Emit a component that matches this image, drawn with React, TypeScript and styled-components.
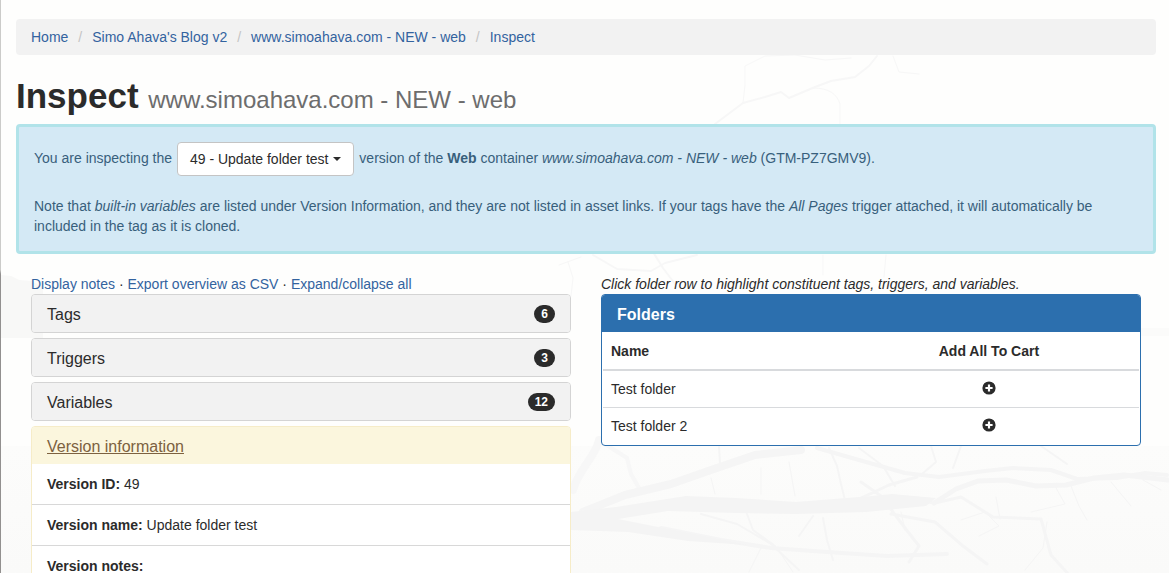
import React from 'react';
import styled, { createGlobalStyle } from 'styled-components';

const GlobalStyle = createGlobalStyle`
  *, *::before, *::after { box-sizing: border-box; }
  html { min-height: 100%; background: #fefefd; }
  body {
    margin: 0;
    overflow: hidden;
    color: #2b2b2b;
    font: 14px/20px "Liberation Sans", Arial, sans-serif;
  }
`;

const Page = styled.div`
  position: relative;
  min-height: 100vh;
  max-height: 100vh;
  overflow: hidden;
  border: 0 solid;
  border-left-width: 1px;
  border-image: linear-gradient(#cbcbc9 270px, #92908f 274px) 1;
  padding: 19px 13px 0 15px;
`;

const Backdrop = styled.svg`
  position: absolute;
  inset: 0;
  width: 100%;
  height: 100%;
`;

const Content = styled.main`
  position: relative;
`;

const Link = styled.a`
  color: #33639f;
  text-decoration: none;
`;

const Breadcrumb = styled.ol`
  display: flex;
  list-style: none;
  margin: 0 0 21px;
  padding: 8px 15px;
  border-radius: 4px;
  background: #f2f2f2;
`;

const Crumb = styled.li`
  & + &::before {
    content: "/";
    padding: 0 10px;
    color: #c4c4c4;
  }
`;

const Title = styled.h1`
  margin: 0 0 4px;
  font-size: 35px;
  line-height: 40px;
  font-weight: 700;
`;

const Subtitle = styled.small`
  font-size: 24px;
  font-weight: 400;
  color: #6d6d6d;
`;

const Notice = styled.section`
  margin-bottom: 20px;
  padding: 15px;
  border: 3px solid #b1e3e9;
  border-radius: 4px;
  background: #d4e9f5;
  color: #38607c;
`;

const NoticeText = styled.p`
  margin: 0;
  & + & { margin-top: 20px; }
`;

const VersionButton = styled.button`
  display: inline-flex;
  align-items: center;
  gap: 5px;
  padding: 6px 12px;
  margin: 0 1px;
  border: 1px solid #c4c4c4;
  border-radius: 4px;
  background: #fff;
  color: #2b2b2b;
  font: inherit;
  vertical-align: middle;
`;

const Caret = styled.span`
  border: 4px solid transparent;
  border-top-color: currentColor;
  border-bottom: 0;
`;

const Columns = styled.div`
  display: grid;
  grid-template-columns: 1fr 1fr;
  align-items: start;
  gap: 30px;
  padding: 0 15px;
`;

const Panel = styled.section<{ $border: string }>`
  border: 1px solid ${(p) => p.$border};
  border-radius: 4px;
  background: #fff;
  overflow: hidden;
  & + & { margin-top: 5px; }
`;

const PanelHead = styled.header<{ $bg: string; $color: string }>`
  display: flex;
  align-items: center;
  justify-content: space-between;
  height: 37px;
  padding: 0 15px;
  background: ${(p) => p.$bg};
  color: ${(p) => p.$color};
`;

const PanelTitle = styled.h2<{ $bold?: boolean }>`
  margin: 0;
  padding-top: 2px;
  font-size: 16px;
  line-height: 20px;
  font-weight: ${(p) => (p.$bold ? 700 : 400)};
`;

const TitleLink = styled.a`
  color: inherit;
`;

const Badge = styled.span`
  padding: 3px 7px;
  border-radius: 10px;
  background: #2b2b2b;
  color: #fff;
  font-size: 12px;
  line-height: 12px;
  font-weight: 700;
`;

const InfoList = styled.ul`
  list-style: none;
  margin: 0;
  padding: 0;
`;

const InfoItem = styled.li`
  padding: 10px 15px;
  & + & { border-top: 1px solid #d8d8d8; }
`;

const Table = styled.table`
  width: 100%;
  border-collapse: separate;
  border-spacing: 0;
  padding: 0 1px 1px;
`;

const Cell = styled.td<{ $center?: boolean }>`
  padding: 8px;
  border-top: 1px solid #d8dadd;
  text-align: ${(p) => (p.$center ? 'center' : 'left')};
`;

const HeadCell = styled.th<{ $center?: boolean }>`
  width: ${(p) => (p.$center ? '56%' : '44%')};
  padding: 9px 8px 8px;
  border-bottom: 1px solid #d8dadd;
  text-align: ${(p) => (p.$center ? 'center' : 'left')};
`;

const IconButton = styled.button`
  display: inline-flex;
  padding: 0;
  border: 0;
  background: none;
  color: #2b2b2b;
  vertical-align: text-top;
`;

const crumbs = ['Home', "Simo Ahava's Blog v2", 'www.simoahava.com - NEW - web', 'Inspect'];
const assets = [
  { name: 'Tags', count: 6 },
  { name: 'Triggers', count: 3 },
  { name: 'Variables', count: 12 },
];
const versionInfo = [
  { label: 'Version ID:', value: '49' },
  { label: 'Version name:', value: 'Update folder test' },
  { label: 'Version notes:', value: '' },
];
const folders = ['Test folder', 'Test folder 2'];

const PlusCircle = () => (
  <svg width="14" height="14" viewBox="0 0 14 14" aria-hidden="true">
    <circle cx="7" cy="7" r="6.6" fill="currentColor" />
    <path d="M7 3.4v7.2M3.4 7h7.2" stroke="#fff" strokeWidth="2.2" />
  </svg>
);

/* Pale lakeside photo: far shore, water and bare branches. */
const Branches = () => (
  <Backdrop viewBox="0 0 1168 573" preserveAspectRatio="xMidYMin slice" aria-hidden="true">
    <defs>
      <linearGradient id="water" x1="0" y1="0" x2="0" y2="1">
        <stop offset="0" stopColor="#fcfcfb" />
        <stop offset="1" stopColor="#fafaf9" />
      </linearGradient>
    </defs>
    <path d="M0 275l10 1 8 4 12 1 12 6v51H0z" fill="#f8f8f7" />
    <path d="M1130 328h38v8h-38z" fill="#fbfbfa" />
    <path d="M0 446h1168v127H0z" fill="url(#water)" />
    <g fill="none" stroke="#f7f7f7" strokeLinecap="round" strokeLinejoin="round">
      <path strokeWidth="2" d="M714 124l28-21 22-6 16-5 8 6 26-11 16-6 24-4 14-11 8-10" />
      <path strokeWidth="1" d="M742 103l2-18V66l20-10 30-1 30 5 26-2M812 88c16 0 24 6 27 16v20M892 56l6 16 20 2" />
      <path strokeWidth="2" d="M592 255l24 14 34 2 14-8 32-8M652 252l10 16 12 16" />
      <path strokeWidth="1" d="M558 265l22-8M567 262l5 16-2 18M822 255v20M885 255l-2 22" />
      <path strokeWidth="8" d="M598 440c-4 18-20 28-26 50" />
      <path strokeWidth="4" d="M604 444l22 14 4 16 8 14" />
    </g>
    <g fill="none" stroke="#f5f5f5" strokeLinecap="round" strokeLinejoin="round">
      <path strokeWidth="8" d="M582 512l42-17 46-11 40-14 44-15 46-5" />
      <path strokeWidth="2" d="M718 447l1 16M828 448l8 18 4 18 4 16M858 448l24 18 12 20M930 446l5 16-14 12M960 446l-8 22M1040 446l26 18" />
      <path strokeWidth="4" d="M816 448l42 12 46 13 34 4 46-6 28-3 38 2 26 9 40-1 28-5 22 2" />
      <path strokeWidth="5" d="M933 503l22-14 22-8 28-1 30 6 30-1 28-7 30-3 44 5" />
      <path strokeWidth="3" d="M856 500l32-15 28-8M860 482l20 14 24 32 14 18-10 16M868 508l40-8 26 3 26-6 32 20 48 2 10 36 20 22M890 514l44 8 28 24 24 18" />
      <path strokeWidth="1" d="M1046 522l-4 26-18 22M1054 486l10 18-34 8M1070 486l8 20 8 14M1110 482l20 24M1142 480l18 10M995 497l4 22M960 520l24-8 14 14-20 10" />
      <path strokeWidth="4" d="M660 528l60 12 50 8 56 4 60 4 60-2" />
      <path strokeWidth="2" d="M700 514l36 10 34 20 28 26M746 514l6 16 22 16M812 516l-14 20M822 518l4 22 6 20" />
      <path strokeWidth="1" d="M710 478l4 16M760 468v26M788 462l6 34M900 512l4 18M760 548l-12 24M776 548l16 24" />
    </g>
    <path fill="#f4f4f4" d="M570 512l45-5 70-11 50 2 60 4 76-6 20-2 44 4-10 8-60 6-70 2-60-1-68-2-50 8 90 18 40 8-60-4-60-9-57-2z" />
  </Backdrop>
);

export default function App() {
  return (
    <Page>
      <GlobalStyle />
      <Branches />
      <Content>
        <nav aria-label="Breadcrumb">
          <Breadcrumb>
            {crumbs.map((c) => (
              <Crumb key={c}><Link href="#">{c}</Link></Crumb>
            ))}
          </Breadcrumb>
        </nav>
        <Title>Inspect <Subtitle>www.simoahava.com - NEW - web</Subtitle></Title>
        <Notice>
          <NoticeText>
            You are inspecting the{' '}
            <VersionButton type="button" aria-haspopup="menu">49 - Update folder test<Caret /></VersionButton>
            {' '}version of the <b>Web</b> container <em>www.simoahava.com - NEW - web</em> (GTM-PZ7GMV9).
          </NoticeText>
          <NoticeText>
            Note that <em>built-in variables</em> are listed under Version Information, and they are not listed in asset
            links. If your tags have the <em>All Pages</em> trigger attached, it will automatically be included in the
            tag as it is cloned.
          </NoticeText>
        </Notice>
        <Columns>
          <div>
            <Link href="#">Display notes</Link> · <Link href="#">Export overview as CSV</Link> ·{' '}
            <Link href="#">Expand/collapse all</Link>
            {assets.map((a) => (
              <Panel key={a.name} $border="#d4d4d4">
                <PanelHead $bg="#f2f2f2" $color="#2b2b2b">
                  <PanelTitle>{a.name}</PanelTitle>
                  <Badge>{a.count}</Badge>
                </PanelHead>
              </Panel>
            ))}
            <Panel $border="#f6ecc8">
              <PanelHead $bg="#fbf6dd" $color="#7c6140">
                <PanelTitle><TitleLink href="#">Version information</TitleLink></PanelTitle>
              </PanelHead>
              <InfoList>
                {versionInfo.map((v) => (
                  <InfoItem key={v.label}><b>{v.label}</b> {v.value}</InfoItem>
                ))}
              </InfoList>
            </Panel>
          </div>
          <div>
            <em>Click folder row to highlight constituent tags, triggers, and variables.</em>
            <Panel $border="#2c6fae">
              <PanelHead $bg="#2c6fae" $color="#fff">
                <PanelTitle $bold>Folders</PanelTitle>
              </PanelHead>
              <Table>
                <thead>
                  <tr><HeadCell>Name</HeadCell><HeadCell $center>Add All To Cart</HeadCell></tr>
                </thead>
                <tbody>
                  {folders.map((f) => (
                    <tr key={f}>
                      <Cell>{f}</Cell>
                      <Cell $center>
                        <IconButton type="button" aria-label={`Add all from ${f} to cart`}><PlusCircle /></IconButton>
                      </Cell>
                    </tr>
                  ))}
                </tbody>
              </Table>
            </Panel>
          </div>
        </Columns>
      </Content>
    </Page>
  );
}
